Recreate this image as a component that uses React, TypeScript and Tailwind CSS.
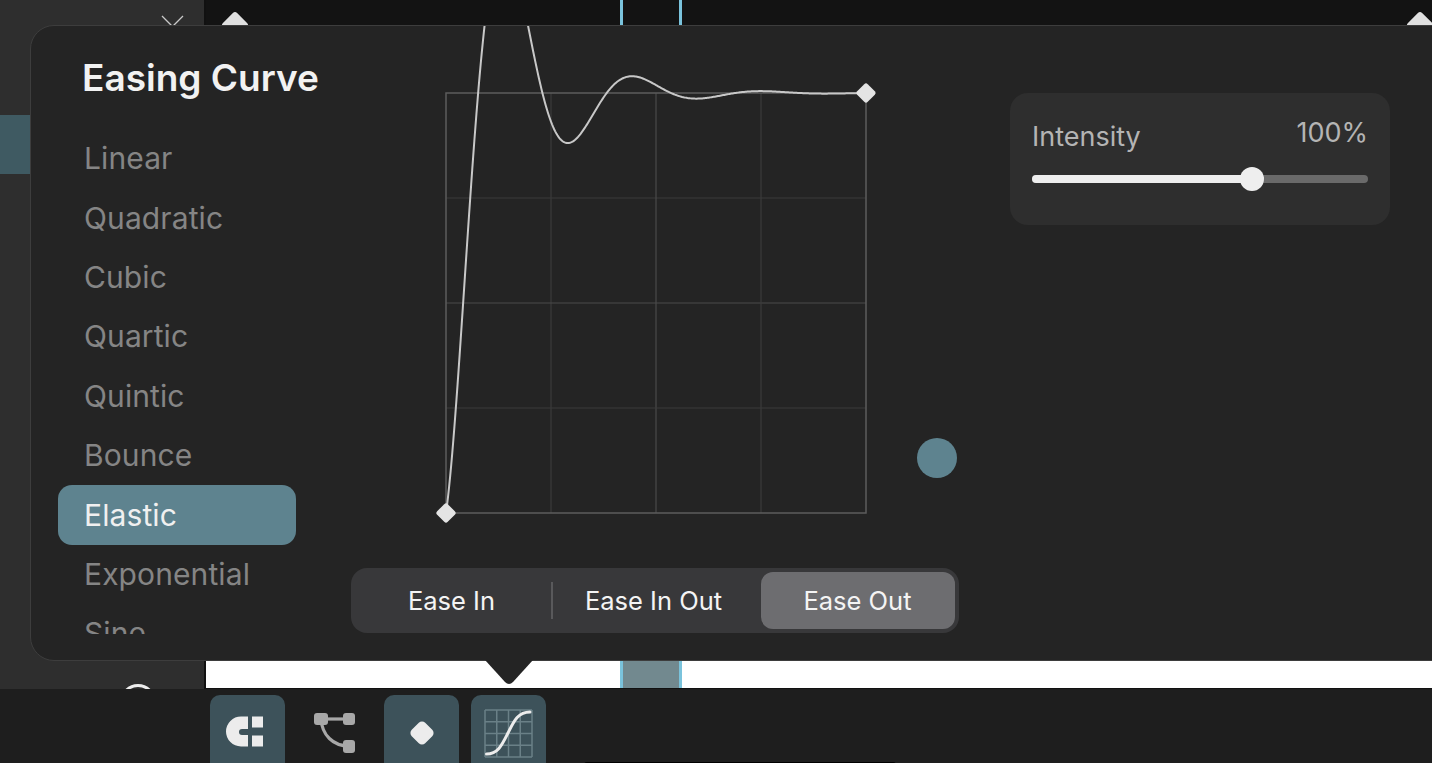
import * as React from 'react';

const FONT = 'font-["Inter","Noto_Sans",sans-serif]';
const curves = ['Linear', 'Quadratic', 'Cubic', 'Quartic', 'Quintic', 'Bounce', 'Elastic', 'Exponential', 'Sine'];

function elasticPath(): string {
  const pts: string[] = [];
  for (let i = 0; i <= 400; i++) {
    const t = i / 400;
    const v = t === 0 ? 0 : Math.pow(2, -10.3 * t) * Math.sin(((9.8 * t - 0.75) * 2 * Math.PI) / 3) + 1;
    pts.push(`${(1 + t * 420).toFixed(2)},${(421 - v * 420).toFixed(2)}`);
  }
  return 'M' + pts.join(' L');
}

function Chart() {
  const inner = [106, 211, 316];
  return (
    <svg width="422" height="422" viewBox="0 0 422 422" className="block overflow-visible">
      {inner.map((p) => (
        <g key={p} stroke={p === 211 ? '#4a4a4a' : '#3b3b3b'} strokeWidth="1.2">
          <line x1={p} y1="1" x2={p} y2="421" />
          <line x1="1" y1={p} x2="421" y2={p} />
        </g>
      ))}
      <rect x="1" y="1" width="420" height="420" fill="none" stroke="#5c5c5c" strokeWidth="1.5" />
      <path d={elasticPath()} fill="none" stroke="#c8c8c8" strokeWidth="2" />
      <rect x="-7.5" y="-7.5" width="15" height="15" rx="2.5" fill="#e4e4e4" transform="translate(1 421) rotate(45)" />
      <rect x="-7.5" y="-7.5" width="15" height="15" rx="2.5" fill="#e4e4e4" transform="translate(421 1) rotate(45)" />
    </svg>
  );
}

function MagnetIcon() {
  return (
    <svg width="38" height="31" viewBox="0 0 38 31" className="mr-[5px] mb-[3px]">
      <path d="M22 .5H15a15 15 0 0 0 0 30H22V19H16a3 3 0 0 1 0-6H22Z" fill="#ececec" />
      <rect x="26" y=".5" width="11" height="11" fill="#ececec" />
      <rect x="26" y="19.5" width="11" height="11" fill="#ececec" />
    </svg>
  );
}

function PathIcon() {
  return (
    <svg width="44" height="44" viewBox="0 0 44 44">
      <g fill="none" stroke="#a8a8a8" strokeWidth="3.2">
        <line x1="8" y1="8" x2="36" y2="8" />
        <path d="M8 8C9 24 20 35 36 35" />
      </g>
      <g fill="#a8a8a8">
        <rect x="1" y="2" width="14" height="12" rx="3" />
        <rect x="30" y="2" width="12" height="12" rx="3" />
        <rect x="30" y="29" width="12" height="13" rx="3" />
      </g>
    </svg>
  );
}

function KeyIcon() {
  return (
    <svg width="28" height="28" viewBox="0 0 28 28">
      <rect x="4.5" y="4.5" width="19" height="19" rx="4.5" fill="#ececec" transform="rotate(45 14 14)" />
    </svg>
  );
}

function CurveIcon() {
  const cells = [0, 11.75, 23.5, 35.25, 47];
  return (
    <svg width="49" height="49" viewBox="0 0 49 49">
      <g stroke="#6a8087" strokeWidth="1.5" fill="none">
        {cells.map((c) => (
          <React.Fragment key={c}>
            <line x1={c + 1} y1="1" x2={c + 1} y2="48" />
            <line x1="1" y1={c + 1} x2="48" y2={c + 1} />
          </React.Fragment>
        ))}
      </g>
      <path d="M2.5 45C14 45 18 36 24 24C30 12 34 3 46 3" fill="none" stroke="#ececec" strokeWidth="3" strokeLinecap="round" />
    </svg>
  );
}

function ToolButton({ active, children }: { active?: boolean; children: React.ReactNode }) {
  return (
    <div className={`w-[75px] h-[68px] rounded-t-[10px] flex items-center justify-center pt-[8px] ${active ? 'bg-[#3d525a]' : ''}`}>
      {children}
    </div>
  );
}

function Panel() {
  return (
    <div className="absolute left-[30px] top-[25px] w-[1440px] h-[636px] rounded-[24px] bg-[#242424] border border-[#3d3d3d] overflow-hidden flex">
      <div className="w-[320px] shrink-0 flex flex-col">
        <h2 className="pl-[51px] pt-[26px] h-[103px] text-[37px] leading-[52px] font-semibold text-[#f2f2f2]">Easing Curve</h2>
        <ul className="pl-[27px] h-[505px] overflow-hidden flex flex-col gap-0">
          {curves.map((c) => (
            <li
              key={c}
              className={`w-[238px] h-[59.4px] shrink-0 rounded-[14px] pl-[26px] flex items-center text-[30px] tracking-[0.1px] ${
                c === 'Elastic' ? 'bg-[#5e838f] text-[#f0f0f0]' : 'text-[#858585]'
              }`}
            >
              {c}
            </li>
          ))}
        </ul>
      </div>
      <div className="w-[608px] shrink-0 flex flex-col relative">
        <div className="pl-[94px] pt-[66px]">
          <Chart />
        </div>
        <div className="absolute left-[566px] top-[412px] w-[40px] h-[40px] rounded-full bg-[#5e838f]" />
        <div className="mt-[54px] h-[65px] rounded-[16px] bg-[#38383a] p-[4px] flex items-center text-[25.5px] text-[#f4f4f4]">
          <div className="w-[196px] h-[57px] flex items-center justify-center pr-[3px] pt-[1px]">Ease In</div>
          <div className="w-[1.5px] h-[37px] bg-[#59595b]" />
          <div className="w-[208px] h-[57px] flex items-center justify-center pr-[6px] pt-[1px]">Ease In Out</div>
          <div className="w-[194px] h-[57px] rounded-[12px] bg-[#6d6d70] flex items-center justify-center pt-[1px]">Ease Out</div>
        </div>
      </div>
      <div className="ml-[51px] mt-[67px] w-[380px] h-[132px] rounded-[18px] bg-[#2e2e2e] px-[22px] pt-[26px] shrink-0">
        <div className="flex justify-between items-start text-[#b4b4b4] text-[27px] leading-[34px]">
          <span className="mt-[1px]">Intensity</span>
          <span className="mt-[-3px]">100%</span>
        </div>
        <div className="relative mt-[21px] h-[8px] rounded-full bg-[#6a6a6a]">
          <div className="h-full w-[220px] rounded-full bg-[#eeeeee]" />
          <div className="absolute left-[208px] top-[-8px] w-[24px] h-[24px] rounded-full bg-[#eeeeee]" />
        </div>
      </div>
    </div>
  );
}

export default function App() {
  return (
    <div className={`relative w-[1432px] h-[763px] overflow-hidden bg-[#1e1e1e] ${FONT}`}>
      <div className="flex h-[689px]">
        <div className="w-[204px] shrink-0 bg-[#2e2e2e] relative flex flex-col overflow-hidden">
          <svg width="26" height="16" viewBox="0 0 26 16" className="ml-[160px] mt-[15px] shrink-0">
            <path d="M2 1L12.5 11.5L23 1" fill="none" stroke="#c9c9c9" strokeWidth="1.3" />
          </svg>
          <div className="mt-[84px] h-[59px] w-full bg-[#3f5a62]" />
          <div className="absolute left-[120px] top-[684px] w-[36px] h-[36px] rounded-full border-[3px] border-[#eeeeee]" />
        </div>
        <div className="flex-1 flex flex-col border-l-2 border-[#111111]">
          <div className="h-[661px] bg-[#131313] relative">
            <div className="absolute left-[19px] top-[15px] w-[20px] h-[20px] rotate-45 rounded-[3px] bg-[#e0e0e0]" />
            <div className="absolute left-[1204px] top-[15px] w-[20px] h-[20px] rotate-45 rounded-[3px] bg-[#e0e0e0]" />
            <div className="absolute left-[414px] top-0 w-[62px] h-full border-x-[3px] border-[#7ac3dc]" />
          </div>
          <div className="h-[28px] bg-white relative border-b border-[#111111]">
            <div className="absolute left-[414px] top-0 w-[62px] h-full bg-[#72898f] border-x-[3px] border-[#7ac3dc]" />
          </div>
        </div>
      </div>
      <div className="flex gap-[12px] pl-[210px] pt-[6px]">
        <ToolButton active><MagnetIcon /></ToolButton>
        <ToolButton><PathIcon /></ToolButton>
        <ToolButton active><KeyIcon /></ToolButton>
        <ToolButton active><CurveIcon /></ToolButton>
      </div>
      <div className="absolute left-[584px] top-[762px] w-[312px] h-[6px] rounded-full bg-black" />
      <Panel />
      <svg width="50" height="26" viewBox="0 0 50 26" className="absolute left-[484px] top-[660px]">
        <path d="M1 0H49L29 22Q25 26 21 22Z" fill="#242424" />
      </svg>
    </div>
  );
}
